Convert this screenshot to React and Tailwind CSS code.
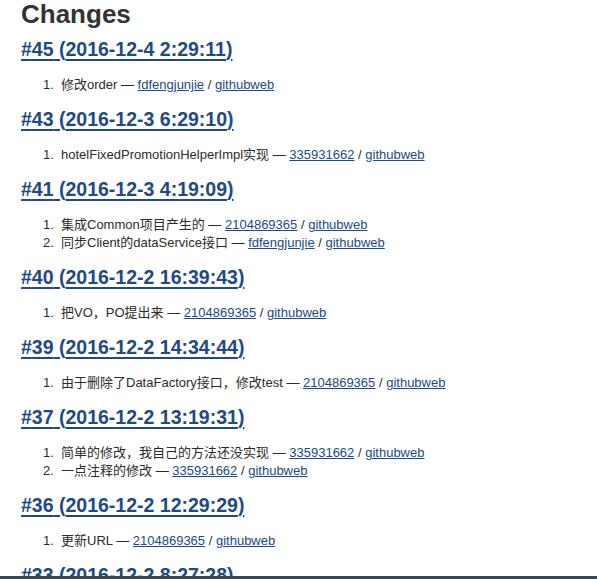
import React from "react";

const builds = [
  { id: 45, date: "2016-12-4 2:29:11", items: [["修改order", "fdfengjunjie"]] },
  { id: 43, date: "2016-12-3 6:29:10", items: [["hotelFixedPromotionHelperImpl实现", "335931662"]] },
  {
    id: 41,
    date: "2016-12-3 4:19:09",
    items: [
      ["集成Common项目产生的", "2104869365"],
      ["同步Client的dataService接口", "fdfengjunjie"],
    ],
  },
  { id: 40, date: "2016-12-2 16:39:43", items: [["把VO，PO提出来", "2104869365"]] },
  { id: 39, date: "2016-12-2 14:34:44", items: [["由于删除了DataFactory接口，修改test", "2104869365"]] },
  {
    id: 37,
    date: "2016-12-2 13:19:31",
    items: [
      ["简单的修改，我自己的方法还没实现", "335931662"],
      ["一点注释的修改", "335931662"],
    ],
  },
  { id: 36, date: "2016-12-2 12:29:29", items: [["更新URL", "2104869365"]] },
  { id: 33, date: "2016-12-2 8:27:28", items: [] },
];

export default function App() {
  return (
    <div
      className="relative h-screen overflow-hidden bg-white pl-[21px] pt-px text-[#333]"
      style={{ fontFamily: '"Liberation Sans", Arial, "Noto Sans CJK SC", sans-serif' }}
    >
      <h1 className="m-0 text-[26px] font-bold leading-[26px]">Changes</h1>
      {builds.map((b, i) => (
        <div key={b.id}>
          <h2
            className={
              (i === 0 ? "mt-[11px]" : "mt-[14px]") +
              " mb-[16px] text-[19.5px] font-bold leading-[22px]"
            }
          >
            <a href="#" className="text-[#204a87] underline decoration-2 underline-offset-[3px]">
              #{b.id} ({b.date})
            </a>
          </h2>
          <ol className="m-0 p-0">
            {b.items.map(([msg, user], j) => (
              <li key={j} className="flex text-[13px] leading-[18px] text-[#2b2b2b]">
                <span className="w-[40px] shrink-0 pl-[22px]">{j + 1}.</span>
                <span>
                  {msg} — <a href="#" className="text-[#204a87] underline">{user}</a> /{" "}
                  <a href="#" className="text-[#204a87] underline">githubweb</a>
                </span>
              </li>
            ))}
          </ol>
        </div>
      ))}
      <div className="absolute bottom-0 left-0 right-0 h-[3px] bg-[#3b4651]" />
    </div>
  );
}
